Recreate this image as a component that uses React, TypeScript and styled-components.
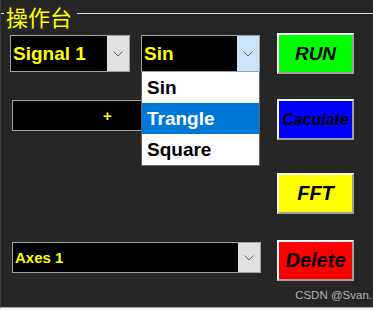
import * as React from "react";
import styled, { createGlobalStyle } from "styled-components";

const GlobalStyle = createGlobalStyle`
    body {
        margin: 0;
        background-color: #f4f4f4;
        font-family: "Liberation Sans", Arial, sans-serif;
    }
`;

const Panel = styled.div`
    position: relative;
    width: 372px;
    height: 307px;
    display: flex;
    flex-direction: column;
    background-color: #262626;
    border-left: 1px solid #3c3c3c;
    border-bottom: 1px solid #a8a8a8;
`;

const TitleRow = styled.div`
    height: 32px;
    display: flex;
    gap: 1px;
    flex-shrink: 0;
`;

const TitleLine = styled.div<{ grow?: boolean }>`
    margin-top: 13px;
    height: 1px;
    width: ${props => (props.grow ? "auto" : "3px")};
    flex-grow: ${props => (props.grow ? 1 : 0)};
    background-color: #dcdcdc;
`;

const Title = styled.div`
    padding: 0 4px 0 1px;
    font-family: "Noto Sans CJK SC", "Liberation Sans", sans-serif;
    font-size: 22px;
    line-height: normal;
    color: #ffff00;
`;

const Content = styled.div`
    display: flex;
    padding-left: 9px;
    gap: 16px;
`;

const LeftColumn = styled.div`
    width: 251px;
    display: flex;
    flex-direction: column;
`;

const RightColumn = styled.div`
    display: flex;
    flex-direction: column;
`;

const ComboRow = styled.div`
    display: flex;
    gap: 11px;
    margin-top: 3px;
`;

const ComboWrap = styled.div<{ top?: number; indent?: number }>`
    position: relative;
    margin-top: ${props => props.top ?? 0}px;
    margin-left: ${props => props.indent ?? 0}px;
`;

const ComboBox = styled.div<{ width: number; height: number }>`
    width: ${props => props.width}px;
    height: ${props => props.height}px;
    display: flex;
    box-sizing: border-box;
    border: 1px solid #a0a0a0;
    background-color: #000;
`;

const ComboText = styled.div<{ size: number }>`
    flex-grow: 1;
    display: flex;
    align-items: center;
    padding-left: 2px;
    color: #ffff00;
    font-weight: bold;
    font-size: ${props => props.size}px;
`;

const ComboButton = styled.div<{ active?: boolean }>`
    width: 22px;
    display: flex;
    align-items: center;
    justify-content: center;
    background-color: ${props => (props.active ? "#cce4f7" : "#e1e1e1")};
`;

const DropList = styled.div`
    position: absolute;
    top: 100%;
    left: 0;
    width: 119px;
    box-sizing: border-box;
    border: 1px solid #646464;
    border-top: none;
    background-color: #fff;
    z-index: 2;
`;

const DropItem = styled.div<{ selected?: boolean }>`
    height: 31px;
    display: flex;
    align-items: center;
    padding-left: 5px;
    font-size: 19px;
    font-weight: bold;
    color: ${props => (props.selected ? "#fff" : "#000")};
    background-color: ${props => (props.selected ? "#0078d7" : "#fff")};
`;

const TextField = styled.div`
    margin-top: 28px;
    margin-left: 2px;
    width: 191px;
    height: 31px;
    box-sizing: border-box;
    border: 1px solid #a0a0a0;
    background-color: #000;
    display: flex;
    align-items: center;
    justify-content: center;
    color: #ffff00;
    font-weight: bold;
    font-size: 15px;
`;

const ActionButton = styled.button<{ color: string; size: number; top: number }>`
    margin-top: ${props => props.top}px;
    width: 77px;
    height: 41px;
    padding: 0;
    box-sizing: border-box;
    border-style: solid;
    border-width: 2px;
    border-color: #f8f8f8 #a0a0a0 #a0a0a0 #f8f8f8;
    background-color: ${props => props.color};
    color: #000;
    font-family: "Liberation Sans", Arial, sans-serif;
    font-weight: bold;
    font-style: italic;
    font-size: ${props => props.size}px;
`;

const Footer = styled.div`
    margin-top: auto;
    padding: 0 1px 6px 0;
    display: flex;
    justify-content: flex-end;
    font-size: 11.5px;
    color: #b4b4b4;
`;

function Chevron() {
    return (
        <svg width="10" height="6" viewBox="0 0 10 6">
            <path d="M0.5 0.5 L5 5 L9.5 0.5" fill="none" stroke="#606060" strokeWidth="1" />
        </svg>
    );
}

interface ComboProps {
    value: string;
    width: number;
    height: number;
    size: number;
    active?: boolean;
}

function Combo({ value, width, height, size, active }: ComboProps) {
    return (
        <ComboBox width={width} height={height}>
            <ComboText size={size}>{value}</ComboText>
            <ComboButton active={active}>
                <Chevron />
            </ComboButton>
        </ComboBox>
    );
}

export default function App() {
    const waves = ["Sin", "Trangle", "Square"];
    return (
        <>
            <GlobalStyle />
            <Panel>
                <TitleRow>
                    <TitleLine />
                    <Title>操作台</Title>
                    <TitleLine grow />
                </TitleRow>
                <Content>
                    <LeftColumn>
                        <ComboRow>
                            <Combo value="Signal 1" width={120} height={37} size={19} />
                            <ComboWrap>
                                <Combo value="Sin" width={119} height={37} size={19} active />
                                <DropList>
                                    {waves.map(wave => (
                                        <DropItem key={wave} selected={wave === "Trangle"}>
                                            {wave}
                                        </DropItem>
                                    ))}
                                </DropList>
                            </ComboWrap>
                        </ComboRow>
                        <TextField>+</TextField>
                        <ComboWrap top={111} indent={2}>
                            <Combo value="Axes 1" width={249} height={31} size={15} />
                        </ComboWrap>
                    </LeftColumn>
                    <RightColumn>
                        <ActionButton color="#00ff00" size={19} top={1}>
                            RUN
                        </ActionButton>
                        <ActionButton color="#0000ff" size={16} top={25}>
                            Caculate
                        </ActionButton>
                        <ActionButton color="#ffff00" size={20} top={33}>
                            FFT
                        </ActionButton>
                        <ActionButton color="#ff0000" size={20} top={26}>
                            Delete
                        </ActionButton>
                    </RightColumn>
                </Content>
                <Footer>CSDN @Svan.</Footer>
            </Panel>
        </>
    );
}
